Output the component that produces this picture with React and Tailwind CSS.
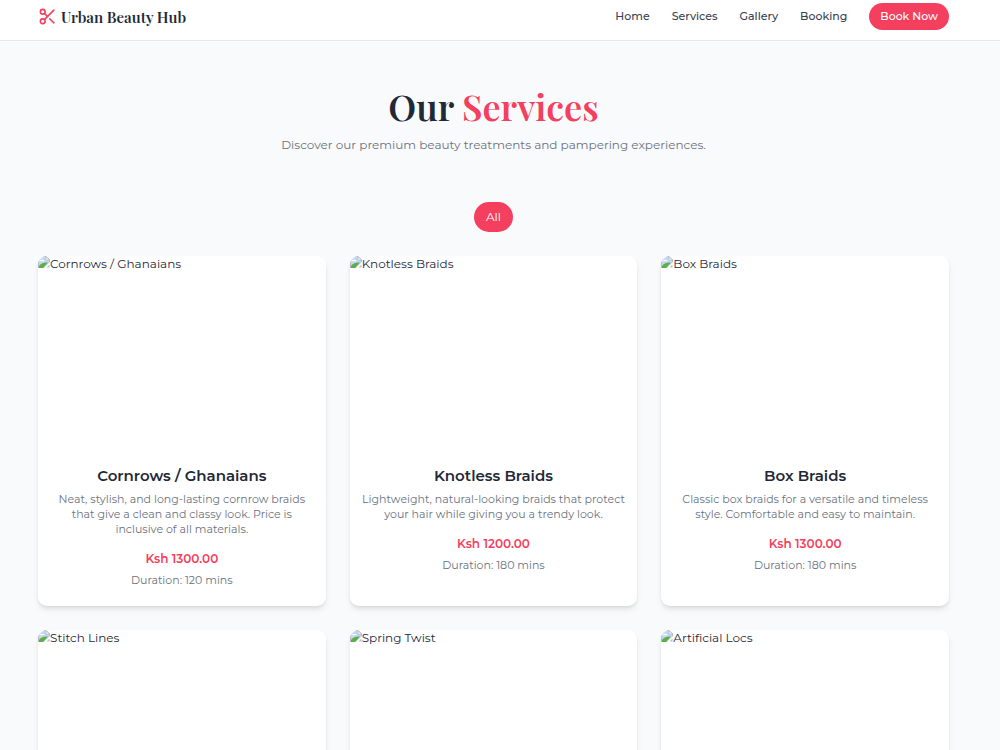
import { Scissors } from "lucide-react";

const navLinks = ["Home", "Services", "Gallery", "Booking"];

const services = [
  {
    name: "Cornrows / Ghanaians",
    description:
      "Neat, stylish, and long-lasting cornrow braids that give a clean and classy look. Price is inclusive of all materials.",
    price: "1300.00",
    duration: 120,
  },
  {
    name: "Knotless Braids",
    description:
      "Lightweight, natural-looking braids that protect your hair while giving you a trendy look.",
    price: "1200.00",
    duration: 180,
  },
  {
    name: "Box Braids",
    description:
      "Classic box braids for a versatile and timeless style. Comfortable and easy to maintain.",
    price: "1300.00",
    duration: 180,
  },
  { name: "Stitch Lines" },
  { name: "Spring Twist" },
  { name: "Artificial Locs" },
];

function MissingImageIcon() {
  return (
    <svg viewBox="0 0 12 12" className="size-3 shrink-0" aria-hidden="true">
      <path d="M0 0h8l4 4v2L6 12H0z" fill="#c3d6f5" />
      <path d="M.5 12V.5H8L11.500 4v2" fill="none" stroke="#b4b8be" />
      <path d="M8 .5V4h3.500z" fill="#f4f5f7" stroke="#a9adb3" strokeWidth="0.5" />
      <path d="M2 5a1.500 1.500 0 0 1 2.500-1 1.400 1.400 0 0 1 2 1.200H2z" fill="#fff" />
      <path d="M1 12V10C3 7.500 5.500 6 10 6.500L5 12z" fill="#5cb043" />
      <path d="M11.500 8.500v3H8.500z" fill="#b9bdc2" />
    </svg>
  );
}

function ServiceCard({ service }) {
  return (
    <article className="overflow-hidden rounded-[9px] bg-white shadow-md">
      <div className="flex h-[200px] items-start text-xs leading-4 text-[#1f2937]">
        <MissingImageIcon />
        <span>{service.name}</span>
      </div>
      {service.description && (
        <div className="px-3 pt-2.5 pb-[18px] text-center">
          <h3 className="text-[15px] leading-5 font-semibold text-[#1f2937]">
            {service.name}
          </h3>
          <p className="mx-auto mt-1.5 max-w-[266px] text-[11px] leading-[15px] text-[#6b7280]">
            {service.description}
          </p>
          <p className="mt-[13px] text-xs leading-[18px] font-semibold text-[#f43f5e]">
            Ksh {service.price}
          </p>
          <p className="mt-[5px] text-[11px] leading-[15px] text-[#6b7280]">
            Duration: {service.duration} mins
          </p>
        </div>
      )}
    </article>
  );
}

export default function App() {
  return (
    <div className="min-h-screen bg-gray-50 font-[Montserrat,Inter,sans-serif]">
      <header className="flex items-center justify-between border-b border-gray-200 bg-white pt-[3px] pr-[51px] pb-2.5 pl-[38px]">
        <a href="#home" className="flex items-center gap-1">
          <Scissors className="size-[19px] text-[#f43f5e]" />
          <span className="font-['Playfair_Display','Liberation_Serif',serif] text-[15px] leading-[18px] font-semibold text-[#1f2937]">
            Urban Beauty Hub
          </span>
        </a>
        <nav className="flex items-center gap-[22px] text-[11px] leading-[15px] font-medium text-[#374151]">
          {navLinks.map((link) => (
            <a key={link} href={`#${link.toLowerCase()}`}>
              {link}
            </a>
          ))}
          <button className="rounded-full bg-[#f43f5e] px-[11px] py-1.5 text-white">
            Book Now
          </button>
        </nav>
      </header>

      <main className="pt-[41px] pr-[51px] pb-12 pl-[38px]">
        <div className="text-center">
          <h1 className="font-['Playfair_Display','Liberation_Serif',serif] text-4xl leading-[48px] font-semibold text-[#1f2937]">
            Our <span className="text-[#f43f5e]">Services</span>
          </h1>
          <p className="mt-1.5 text-xs leading-[17px] text-[#6b7280]">
            Discover our premium beauty treatments and pampering experiences.
          </p>
        </div>

        <div className="mt-[49px] flex justify-center">
          <button className="rounded-full bg-[#f43f5e] px-3 py-1.5 text-xs leading-[18px] text-white">
            All
          </button>
        </div>

        <section className="mt-6 grid grid-cols-3 gap-6">
          {services.map((service) => (
            <ServiceCard key={service.name} service={service} />
          ))}
        </section>
      </main>
    </div>
  );
}
